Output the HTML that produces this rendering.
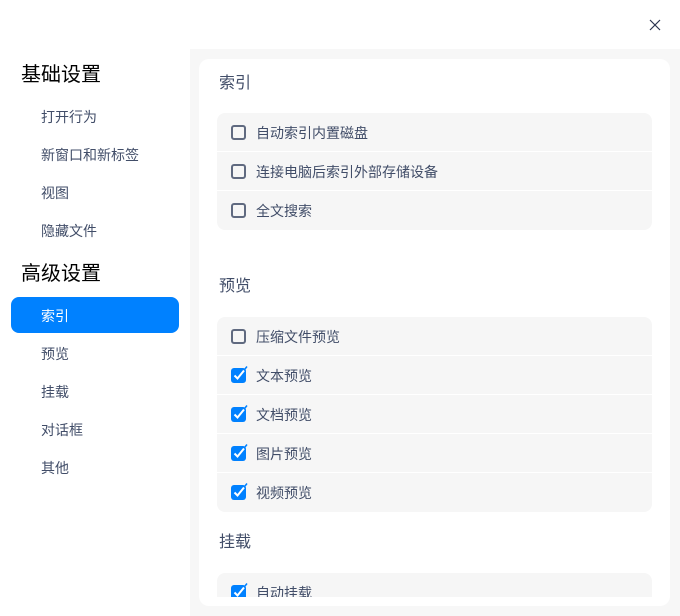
<!DOCTYPE html><html><head><meta charset="utf-8"><style>
*{margin:0;padding:0;box-sizing:border-box}
body{width:680px;height:616px;background:#fff;font-family:"Liberation Sans","Noto Sans CJK SC",sans-serif;position:relative;overflow:hidden;color:#333}
.a{position:absolute;white-space:nowrap;line-height:1}
.h{font-size:20px;color:#000;left:21px}
.n{font-size:14px;color:#414d68;left:41px}
.sel{position:absolute;left:11px;top:297px;width:168px;height:36px;background:#0081ff;border-radius:8px}
.right{position:absolute;left:190px;top:49px;width:490px;height:567px;background:#f7f7f7}
.card{position:absolute;left:199px;top:59px;width:471px;height:547px;background:#fff;border-radius:10px;overflow:hidden}
.t{font-size:16px;color:#414d68;left:20px}
.g{position:absolute;left:18px;width:435px;background:#f6f6f6;border-radius:8px}
.r{height:39px;border-bottom:1px solid #fff;position:relative;font-size:14px;color:#414d68}
.r:last-child{border-bottom:none}
.r span{position:absolute;left:39px;top:13px;line-height:1}
.cb{position:absolute;left:14px;top:12px;width:15px;height:15px;border:2px solid #606a80;border-radius:3px}
.ck{position:absolute;left:14px;top:10px}
</style></head><body>
<svg class="a" style="left:649px;top:19px" width="12" height="12"><path d="M1 1L11 11M11 1L1 11" stroke="#2a3450" stroke-width="1.2"/></svg>
<div class="a h" style="top:65px">基础设置</div>
<div class="a n" style="top:110px">打开行为</div>
<div class="a n" style="top:148px">新窗口和新标签</div>
<div class="a n" style="top:186px">视图</div>
<div class="a n" style="top:224px">隐藏文件</div>
<div class="a h" style="top:264px">高级设置</div>
<div class="sel"></div>
<div class="a n" style="top:309px;color:#fff">索引</div>
<div class="a n" style="top:347px">预览</div>
<div class="a n" style="top:385px">挂载</div>
<div class="a n" style="top:423px">对话框</div>
<div class="a n" style="top:461px">其他</div>
<div class="right"></div>
<div class="card">
<div class="a t" style="top:17px">索引</div>
<div class="g" style="top:54px">
<div class="r"><i class="cb"></i><span>自动索引内置磁盘</span></div>
<div class="r"><i class="cb"></i><span>连接电脑后索引外部存储设备</span></div>
<div class="r"><i class="cb"></i><span>全文搜索</span></div>
</div>
<div class="a t" style="top:220px">预览</div>
<div class="g" style="top:258px">
<div class="r"><i class="cb"></i><span>压缩文件预览</span></div>
<div class="r"><svg class="ck" width="18" height="18"><rect x="0" y="2" width="15" height="15" rx="3" fill="#0081ff"/><path d="M3.5 9.5L6.5 12.5L13 4.5" stroke="#fff" stroke-width="2" fill="none"/><path d="M14 3L16 0.5" stroke="#0081ff" stroke-width="1.5"/></svg><span>文本预览</span></div>
<div class="r"><svg class="ck" width="18" height="18"><rect x="0" y="2" width="15" height="15" rx="3" fill="#0081ff"/><path d="M3.5 9.5L6.5 12.5L13 4.5" stroke="#fff" stroke-width="2" fill="none"/><path d="M14 3L16 0.5" stroke="#0081ff" stroke-width="1.5"/></svg><span>文档预览</span></div>
<div class="r"><svg class="ck" width="18" height="18"><rect x="0" y="2" width="15" height="15" rx="3" fill="#0081ff"/><path d="M3.5 9.5L6.5 12.5L13 4.5" stroke="#fff" stroke-width="2" fill="none"/><path d="M14 3L16 0.5" stroke="#0081ff" stroke-width="1.5"/></svg><span>图片预览</span></div>
<div class="r"><svg class="ck" width="18" height="18"><rect x="0" y="2" width="15" height="15" rx="3" fill="#0081ff"/><path d="M3.5 9.5L6.5 12.5L13 4.5" stroke="#fff" stroke-width="2" fill="none"/><path d="M14 3L16 0.5" stroke="#0081ff" stroke-width="1.5"/></svg><span>视频预览</span></div>
</div>
<div class="a t" style="top:476px">挂载</div>
<div class="g" style="top:514px;height:24px;border-radius:8px 8px 0 0;overflow:hidden">
<div class="r"><svg class="ck" width="18" height="18"><rect x="0" y="2" width="15" height="15" rx="3" fill="#0081ff"/><path d="M3.5 9.5L6.5 12.5L13 4.5" stroke="#fff" stroke-width="2" fill="none"/><path d="M14 3L16 0.5" stroke="#0081ff" stroke-width="1.5"/></svg><span>自动挂载</span></div>
</div>
</div>
</body></html>
